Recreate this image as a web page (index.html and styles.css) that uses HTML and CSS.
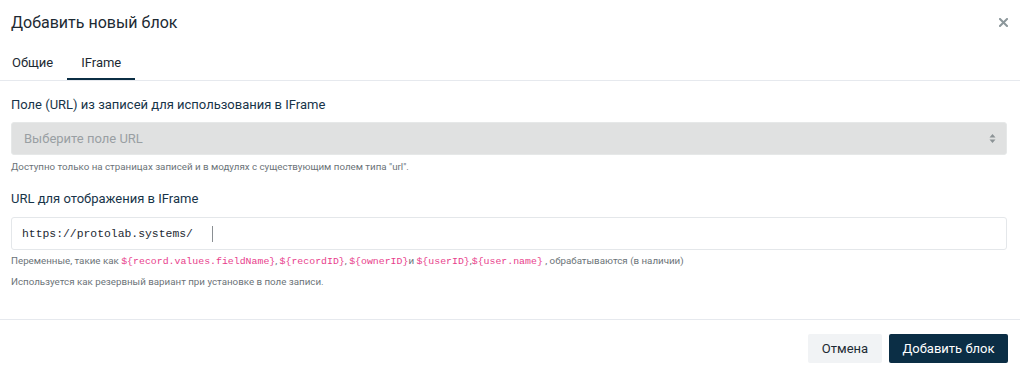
FILE: index.html
```html
<!DOCTYPE html>
<html lang="ru">
<head>
<meta charset="utf-8">
<link rel="stylesheet" href="styles.css">
</head>
<body>
<div class="modal">
  <div class="header">
    <h1 class="title">Добавить новый блок</h1>
    <span class="close">
      <svg width="9" height="9" viewBox="0 0 9 9"><path d="M1 1L8 8M8 1L1 8" stroke="#8c979b" stroke-width="2" stroke-linecap="square"/></svg>
    </span>
  </div>
  <div class="tabs">
    <div class="tab">Общие</div>
    <div class="tab active">IFrame</div>
  </div>
  <div class="body">
    <div class="field">
      <div class="label">Поле (URL) из записей для использования в IFrame</div>
      <div class="select">
        <span class="placeholder">Выберите поле URL</span>
        <svg class="arrows" width="7" height="11" viewBox="0 0 7 11"><path d="M3.5 1L6.5 4.5H0.5Z M3.5 10L6.5 6.5H0.5Z" fill="#8c9396"/></svg>
      </div>
      <div class="help">Доступно только на страницах записей и в модулях с существующим полем типа "url".</div>
    </div>
    <div class="field">
      <div class="label">URL для отображения в IFrame</div>
      <div class="input"><span class="mono">https://protolab.systems/</span><span class="caret"></span></div>
      <div class="help">Переменные, такие как <code>${record.values.fieldName}</code>, <code>${recordID}</code>, <code>${ownerID}</code>и <code>${userID}</code>,<code>${user.name}</code> , обрабатываются (в наличии)</div>
      <div class="help help2">Используется как резервный вариант при установке в поле записи.</div>
    </div>
  </div>
  <div class="footer">
    <button class="btn btn-light">Отмена</button>
    <button class="btn btn-dark">Добавить блок</button>
  </div>
</div>
</body>
</html>
```
FILE: styles.css
```css
html, body {
  margin: 0;
  padding: 0;
  background: #fff;
}
body {
  font-family: Roboto, "Noto Sans", sans-serif;
  color: #162d3d;
  width: 1020px;
  height: 374px;
  overflow: hidden;
}
.modal {
  display: flex;
  flex-direction: column;
}
.header {
  display: flex;
  justify-content: space-between;
  align-items: center;
  height: 44px;
  padding: 0 12px 0 11px;
}
.title {
  margin: 0;
  font-size: 16px;
  font-weight: 400;
  color: #1d2a33;
}
.close {
  display: flex;
  width: 9px;
  height: 9px;
}
.tabs {
  display: flex;
  height: 36px;
  border-bottom: 1px solid #e6e9ee;
}
.tab {
  font-size: 13px;
  color: #1d2a33;
  padding: 2px 14px 0;
  display: flex;
  align-items: center;
  border-bottom: 2px solid transparent;
}
.tab:first-child {
  padding-left: 12px;
}
.tab.active {
  border-bottom-color: #0b2e44;
  margin-left: 0;
}
.body {
  padding: 15px 13px 31px 11px;
  border-bottom: 1px solid #e6e9ee;
}
.field {
  display: flex;
  flex-direction: column;
}
.field + .field {
  margin-top: 17px;
}
.label {
  font-size: 13px;
  color: #173449;
  line-height: 18px;
  margin-bottom: 8px;
}
.field + .field .label {
  margin-bottom: 9px;
}
.select {
  height: 33px;
  background: #e0e1e1;
  border: 1px solid #e6e8e8;
  border-radius: 3px;
  box-sizing: border-box;
  display: flex;
  align-items: center;
  justify-content: space-between;
  padding: 0 10px 0 12px;
}
.placeholder {
  font-size: 13px;
  color: #999fa3;
}
.arrows {
  display: block;
}
.help {
  font-size: 9.75px;
  color: #6b7378;
  margin-top: 6px;
  line-height: 12px;
}
.input + .help {
  margin-top: 5px;
}
.help2 {
  margin-top: 8px;
}
.input {
  height: 33px;
  border: 1px solid #e4e7ea;
  border-radius: 3px;
  box-sizing: border-box;
  display: flex;
  align-items: center;
  padding: 0 10px;
}
.mono {
  font-family: "Liberation Mono", "DejaVu Sans Mono", monospace;
  font-size: 11.4px;
  color: #1d2a33;
}
.caret {
  width: 1px;
  height: 16px;
  background: #8a8f93;
  margin-left: 19px;
}
code {
  font-family: "Liberation Mono", "DejaVu Sans Mono", monospace;
  font-size: 9.9px;
  color: #e83e8c;
}
.footer {
  display: flex;
  justify-content: flex-end;
  gap: 7px;
  padding: 14px 12px 0 0;
}
.btn {
  font-family: Roboto, "Noto Sans", sans-serif;
  font-size: 13px;
  height: 29px;
  border: none;
  border-radius: 2px;
  padding: 0;
  white-space: nowrap;
  text-align: center;
  cursor: pointer;
}
.btn-light {
  background: #f1f3f5;
  color: #1d2a33;
  width: 74px;
}
.btn-dark {
  background: #0b2e45;
  color: #fff;
  width: 119px;
}
```
